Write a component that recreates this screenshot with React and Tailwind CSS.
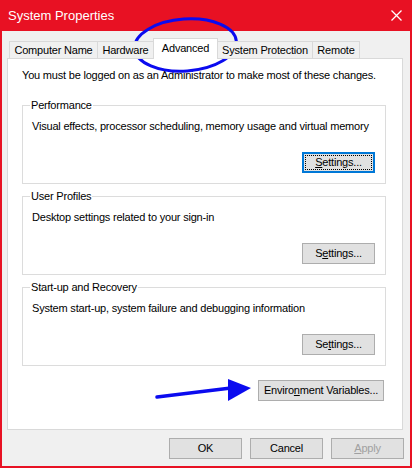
export default function App() {
  const Btn = ({ children, w = "w-[73px]", className = "" }) => (
    <div
      className={`${w} h-[21px] shrink-0 bg-[#e1e1e1] border border-[#adadad] flex items-center justify-center leading-none ${className}`}
    >
      {children}
    </div>
  );

  const Tab = ({ label, w, selected }) =>
    selected ? (
      <div
        className={`${w} h-[21px] -ml-px relative z-10 bg-white border-t border-l border-r border-[#d9d9d9] flex items-center justify-center pb-[1px]`}
      >
        {label}
      </div>
    ) : (
      <div
        className={`${w} h-[18px] -ml-px first:ml-0 bg-[#f0f0f0] border border-[#d9d9d9] flex items-center justify-center`}
      >
        {label}
      </div>
    );

  const Group = ({ title, desc, button, className = "" }) => (
    <fieldset
      className={`w-[364px] border border-[#dcdcdc] pl-[9px] pr-[10px] pb-[10px] ${className}`}
    >
      <legend className="-ml-[2px] px-[1px] leading-[16px]">{title}</legend>
      <div className="mt-[5px] leading-[16px]">{desc}</div>
      <div className="mt-[18px] flex justify-end">{button}</div>
    </fieldset>
  );

  return (
    <div className="relative w-[412px] h-[468px] bg-[#e81123] flex flex-col font-['Liberation_Sans',Arial,sans-serif] text-[11px] tracking-[-0.2px] text-black">
      {/* Title bar */}
      <div className="h-[31px] shrink-0 flex items-center justify-between pl-[8px] pr-[10px]">
        <span className="text-white text-[13px] tracking-normal leading-none">
          System Properties
        </span>
        <svg width="11" height="11" viewBox="0 0 11 11">
          <path
            d="M0.5 0.5 L10.5 10.5 M10.5 0.5 L0.5 10.5"
            stroke="#ffffff"
            strokeWidth="1.3"
          />
        </svg>
      </div>

      {/* Body */}
      <div className="flex-1 mx-[2px] mb-[2px] bg-[#f0f0f0] flex flex-col pt-[7px] pl-[5px]">
        {/* Tabs */}
        <div className="relative z-10 flex items-end h-[21px] -mb-px pl-[2px]">
          <Tab label="Computer Name" w="w-[89px]" />
          <Tab label="Hardware" w="w-[57px]" />
          <Tab label="Advanced" w="w-[65px]" selected />
          <Tab label="System Protection" w="w-[96px]" />
          <Tab label="Remote" w="w-[48px]" />
        </div>

        {/* Panel */}
        <div className="w-[396px] h-[372px] shrink-0 border border-[#d9d9d9] bg-white flex flex-col pt-[8px] pl-[14px]">
          <div className="leading-[16px]">
            You must be logged on as an Administrator to make most of these
            changes.
          </div>

          <Group
            className="mt-[14px]"
            title="Performance"
            desc="Visual effects, processor scheduling, memory usage and virtual memory"
            button={
              <div className="w-[73px] h-[21px] shrink-0 bg-[#e1e1e1] border-2 border-[#0078d7] p-[1px] flex">
                <div className="flex-1 border border-dotted border-black flex items-center justify-center leading-none">
                  <span>
                    <span className="underline">S</span>ettings...
                  </span>
                </div>
              </div>
            }
          />

          <Group
            className="mt-[4px]"
            title="User Profiles"
            desc="Desktop settings related to your sign-in"
            button={
              <Btn>
                <span>
                  S<span className="underline">e</span>ttings...
                </span>
              </Btn>
            }
          />

          <Group
            className="mt-[4px]"
            title="Start-up and Recovery"
            desc="System start-up, system failure and debugging information"
            button={
              <Btn>
                <span>
                  Se<span className="underline">t</span>tings...
                </span>
              </Btn>
            }
          />

          <div className="w-[364px] mt-[14px] flex justify-end pr-[2px]">
            <Btn w="w-[126px]">
              <span>
                Enviro<span className="underline">n</span>ment Variables...
              </span>
            </Btn>
          </div>
        </div>

        {/* Bottom buttons */}
        <div className="mt-[8px] flex justify-end gap-[8px] pr-[6px]">
          <Btn>OK</Btn>
          <Btn>Cancel</Btn>
          <Btn className="text-[#a0a0a0]">
            <span>
              <span className="underline">A</span>pply
            </span>
          </Btn>
        </div>
      </div>

      {/* Annotations */}
      <svg
        className="absolute inset-0 pointer-events-none"
        width="412"
        height="468"
        viewBox="0 0 412 468"
      >
        <ellipse
          cx="185.5"
          cy="45"
          rx="51"
          ry="26"
          transform="rotate(-4 185.5 45)"
          fill="none"
          stroke="#0b0bef"
          strokeWidth="3"
        />
        <path
          d="M157 397 L231 388"
          stroke="#0b0bef"
          strokeWidth="3.5"
          strokeLinecap="round"
        />
        <polygon points="228,379 251,388 228,401" fill="#0b0bef" />
      </svg>
    </div>
  );
}
